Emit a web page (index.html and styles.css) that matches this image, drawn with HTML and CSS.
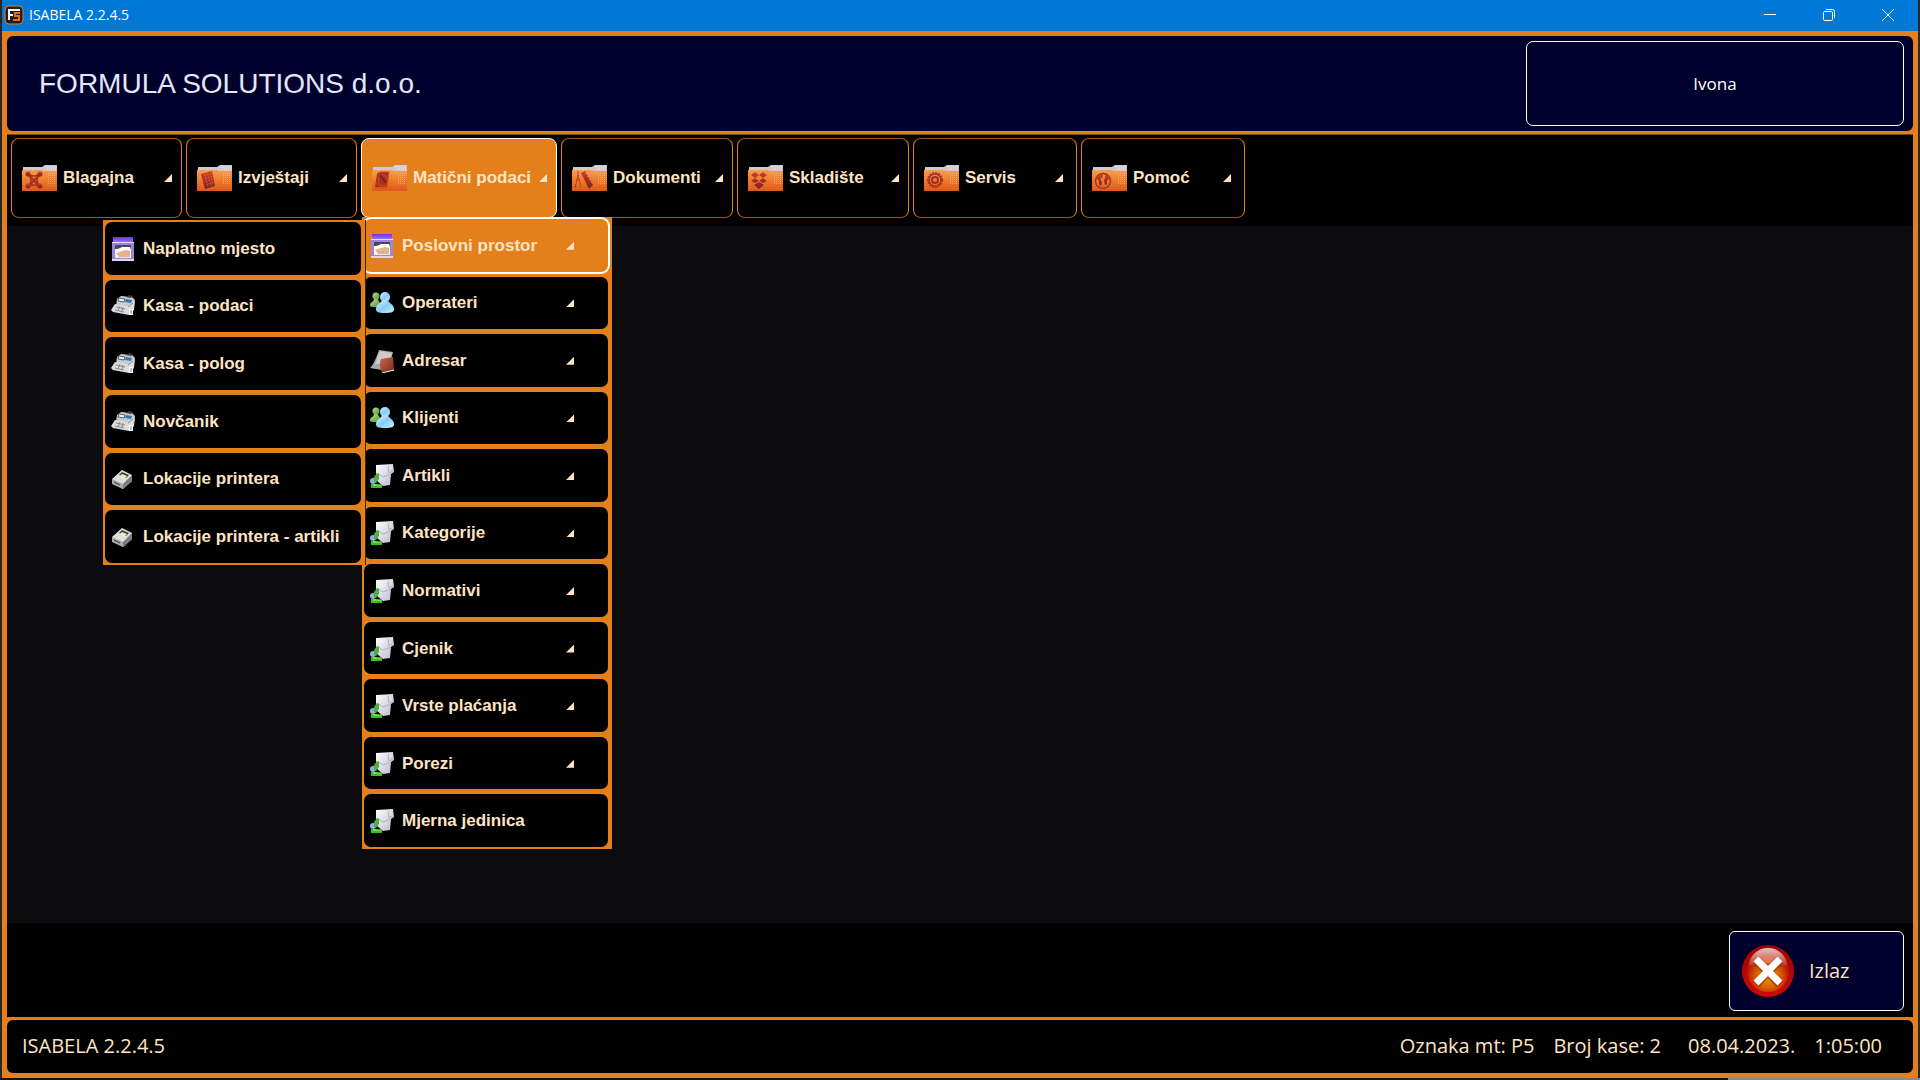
FILE: index.html
```html
<!DOCTYPE html>
<html lang="hr">
<head>
<meta charset="utf-8">
<title>ISABELA 2.2.4.5</title>
<link rel="stylesheet" href="styles.css">
</head>
<body>
<svg class="sprite" aria-hidden="true">
  <defs>
    <linearGradient id="g-folder" x1="0" y1="0" x2="0" y2="1"><stop offset="0" stop-color="#f5a050"/><stop offset=".5" stop-color="#ee7a2e"/><stop offset="1" stop-color="#e0581a"/></linearGradient>
    <linearGradient id="g-glyph" x1="0" y1="0" x2="0" y2="1"><stop offset="0" stop-color="#cf3f1d"/><stop offset="1" stop-color="#7c1d2c"/></linearGradient>
    <linearGradient id="g-blue" x1="0" y1="0" x2="1" y2="1"><stop offset="0" stop-color="#d8f4ff"/><stop offset=".5" stop-color="#86cdf4"/><stop offset="1" stop-color="#c8efff"/></linearGradient>
    <linearGradient id="g-green" x1="0" y1="0" x2="1" y2="1"><stop offset="0" stop-color="#b6e08e"/><stop offset="1" stop-color="#4c9430"/></linearGradient>
    <linearGradient id="g-paper" x1="0" y1="0" x2="1" y2="1"><stop offset="0" stop-color="#ffffff"/><stop offset="1" stop-color="#b8b8cc"/></linearGradient>
    <linearGradient id="g-violet" x1="0" y1="0" x2="0" y2="1"><stop offset="0" stop-color="#7030f0"/><stop offset="1" stop-color="#a07cf8"/></linearGradient>
    <linearGradient id="g-brick" x1="0" y1="0" x2="1" y2="1"><stop offset="0" stop-color="#c9694a"/><stop offset="1" stop-color="#7c2b18"/></linearGradient>
    <radialGradient id="g-exit" cx=".5" cy=".62" r=".5"><stop offset="0" stop-color="#f29a00"/><stop offset=".55" stop-color="#d96406"/><stop offset="1" stop-color="#b81806"/></radialGradient>
    <linearGradient id="g-rim" x1="0" y1="0" x2="0" y2="1"><stop offset="0" stop-color="#9a0404"/><stop offset="1" stop-color="#d00808"/></linearGradient>
    <linearGradient id="g-shine" x1="0" y1="0" x2="0" y2="1"><stop offset="0" stop-color="#fff" stop-opacity=".75"/><stop offset="1" stop-color="#fff" stop-opacity=".1"/></linearGradient>
    <pattern id="p-dots" width="2" height="2" patternUnits="userSpaceOnUse"><rect width="1" height="1" fill="#ffc080" fill-opacity=".55"/></pattern>
  </defs>
  <symbol id="folder" viewBox="0 0 35 26">
    <path d="M1 6V2h19l3-2h12v8H1z" fill="#d2c8d2"/>
    <path d="M23 2h11M25 4h9" stroke="#f0e8ee" stroke-width="1" stroke-dasharray="1 1"/>
    <path d="M0 5h20l2 1h13v20H0z" fill="url(#g-folder)"/>
    <path d="M25 7h9v13h-9z" fill="url(#p-dots)"/>
  </symbol>
  <symbol id="cash" viewBox="0 0 35 26">
    <use href="#folder"/>
    <g fill="none" stroke="#a8301f" stroke-width="2"><path d="M6 9l12 13M18 9L6 22"/><path d="M7 8c1 4 9 4 10 0M7 23c1-4 9-4 10 0M6 10c4 2 4 9 0 11M18 10c-4 2-4 9 0 11" stroke-width="1.500"/></g>
    <g fill="url(#g-glyph)"><circle cx="6" cy="9" r="2.500"/><circle cx="18" cy="9" r="2.500"/><circle cx="6" cy="21" r="2.500"/><circle cx="18" cy="21" r="2.500"/></g>
  </symbol>
  <symbol id="report" viewBox="0 0 35 26">
    <use href="#folder"/>
    <path d="M4 9l11-3 3 15-10 3z" fill="url(#g-glyph)"/>
    <path d="M6 11l10-3M6 14l11-3M7 17l10-3M8 20l10-3M7 8l4 14M10 7l4 14M13 7l3 14" stroke="#ec7a38" stroke-width="1" stroke-opacity=".35"/>
  </symbol>
  <symbol id="master" viewBox="0 0 35 26">
    <use href="#folder"/>
    <path d="M3 22L5 9l3-2h9l-2 15z" fill="#a8321f"/>
    <path d="M6 20L7 10h5l4 4-2 7zM3 23h12M5 9l3-2h9l-2 14" fill="none" stroke="#d0481e" stroke-width="1"/>
    <path d="M8 10l6 8" stroke="#7a2020" stroke-width="2"/>
  </symbol>
  <symbol id="docs" viewBox="0 0 35 26">
    <use href="#folder"/>
    <path d="M9 8l4-2 8 14-4 4z" fill="url(#g-glyph)"/>
    <path d="M13 9l2-1M15 12l2-1M17 15l2-1M19 18l1-1" stroke="#ec7a38" stroke-width="1"/>
    <path d="M6 6v5l-3 12M6 10l3 12M4 15h4" fill="none" stroke="#b5401f" stroke-width="1"/>
  </symbol>
  <symbol id="stock" viewBox="0 0 35 26">
    <use href="#folder"/>
    <path d="M7 7l4 3-4 3-4-3zM15 7l4 3-4 3-4-3zM7 13l4 3-4 2-4-2zM15 13l4 3-4 2-4-2zM11 17l5 3-5 4-5-4z" fill="url(#g-glyph)"/>
  </symbol>
  <symbol id="service" viewBox="0 0 35 26">
    <use href="#folder"/>
    <circle cx="11" cy="15" r="7" fill="none" stroke="#a83222" stroke-width="2" stroke-dasharray="2 1"/>
    <circle cx="11" cy="15" r="6" fill="none" stroke="#a83222" stroke-width="1.500"/>
    <circle cx="11" cy="15" r="3" fill="none" stroke="#a02c28" stroke-width="2"/>
  </symbol>
  <symbol id="help" viewBox="0 0 35 26">
    <use href="#folder"/>
    <circle cx="11" cy="16" r="7.500" fill="none" stroke="#a83222" stroke-width="1.500"/>
    <path d="M5 13l4-4 2 1-1 3-2 1 2 3-1 4-2-2v-3zM13 10l3 1 1 3-2 1v4l-2 1-1-5 1-2z" fill="url(#g-glyph)"/>
  </symbol>
  <symbol id="shop" viewBox="0 0 24 24">
    <path d="M2 0h20v6H2z" fill="url(#g-violet)"/>
    <path d="M1 6h22v18H1z" fill="#9c86d8"/>
    <path d="M1 5h22v1H1z" fill="#e6defc"/>
    <path d="M4 8h16v13H4z" fill="#e9e6ee"/>
    <path d="M4 8h16v4H4z" fill="#4a4a52"/>
    <path d="M4 13l5-2 2-1h8l1 3v7H5z" fill="#fff"/>
    <path d="M5 16l6-2 4-1 4 1v6H8z" fill="#e3b48c"/>
    <path d="M1 22h22v2H1z" fill="#ded6ee"/>
  </symbol>
  <symbol id="register" viewBox="0 0 24 24">
    <path d="M6 5l4-3 11 1 3 3-2 8-17-2z" fill="#c4ccd4"/>
    <path d="M14 3l4-2 4 1-2 2z" fill="#3c3c3c"/>
    <path d="M8 4l6 1-1 3-6-1z" fill="#eef2f4" stroke="#55595d" stroke-width="1"/>
    <path d="M15 5l6 1-1 3-6-1z" fill="#2f78b4"/>
    <path d="M4 10l13 2 7-5-1 9-5 5-16-3-2-2z" fill="#dcdcdc"/>
    <path d="M5 13l9 2M4 16l9 2M9 12l-2 5M12 13l-1 4M17 13l5-4" fill="none" stroke="#85898f"/>
    <path d="M18 15h4v6h-4z" fill="#fff"/><path d="M20 16v4" stroke="#5a8ab4"/>
  </symbol>
  <symbol id="printer" viewBox="0 0 24 24">
    <path d="M1 12L11 3l10 5v6l-9 8-11-6z" fill="#dedede"/>
    <path d="M1 12l11 5v5L1 17z" fill="#a8a8a8"/>
    <path d="M12 17l9-9v6l-9 8z" fill="#7c7c7c"/>
    <path d="M8 8l3-3 7 3-3 3z" fill="#3d3d3d"/><path d="M9 9l2-2 5 2-3 3z" fill="#f2eebc"/>
    <path d="M3 15l6 3" stroke="#333" stroke-width="1"/>
  </symbol>
  <symbol id="people" viewBox="0 0 24 24">
    <circle cx="6" cy="5" r="3.500" fill="url(#g-green)"/>
    <path d="M4 8h4c0 2 3 3 3 8H3c-2 0-3-1-3-2 0-3 4-3 4-6z" fill="url(#g-green)"/>
    <circle cx="15" cy="6" r="5" fill="url(#g-blue)"/>
    <path d="M12 9h6c0 3 6 4 6 9 0 3-2 4-9 4s-9-1-9-4c0-5 6-6 6-9z" fill="url(#g-blue)"/>
  </symbol>
  <symbol id="address" viewBox="0 0 24 24">
    <path d="M9 1l14 2-5 19-18-3c4-4 6-10 9-18z" fill="#a9a9a9"/>
    <path d="M10 2l12 2-3 10-14 1z" fill="#cccccc"/>
    <path d="M11 10l12-2 1 13-12 2c-2-3-3-8-1-13z" fill="url(#g-brick)"/>
    <path d="M12 24l12-3" stroke="#fff" stroke-width="1"/>
  </symbol>
  <symbol id="item" viewBox="0 0 24 24">
    <path d="M6 1l17-1 1 8-3 2-1 11-7 1-7-6z" fill="url(#g-paper)"/>
    <path d="M7 9l6 4 8-3M18 2l1 7 4-2" fill="none" stroke="#b0b0c6"/>
    <circle cx="3" cy="17" r="3" fill="#88b4e4"/>
    <path d="M4 13l3-4 2 1v5l-3 4-2-1z" fill="#4fae3c"/>
    <path d="M1 20h5l2 1h4v3H1z" fill="#35c414"/><path d="M3 21h8" stroke="#b6f48a"/>
  </symbol>
</svg>

<header class="titlebar">
  <svg class="app-logo" viewBox="0 0 20 20" aria-hidden="true">
    <rect x="1" y="1" width="18" height="18" rx="4" fill="#22201f" stroke="#e4801c" stroke-width="1"/>
    <path d="M5 15V5h11M5 10h4" fill="none" stroke="#fff" stroke-width="2"/>
    <path d="M16 8h-5v3h4v4H9" fill="none" stroke="#e4701c" stroke-width="2"/>
  </svg>
  <h1 class="titlebar-text">ISABELA 2.2.4.5</h1>
  <div class="window-controls">
    <button type="button" aria-label="Minimize"><svg viewBox="0 0 12 12"><path d="M0 5.500h12"/></svg></button>
    <button type="button" aria-label="Restore"><svg viewBox="0 0 12 12"><rect x=".5" y="2.500" width="9" height="9" rx="1"/><path d="M3 .5h6.500a2 2 0 0 1 2 2V9"/></svg></button>
    <button type="button" aria-label="Close"><svg viewBox="0 0 12 12"><path d="M0 0l12 12M12 0L0 12"/></svg></button>
  </div>
</header>

<div class="frame">
  <section class="company">
    <h2 class="company-name">FORMULA SOLUTIONS d.o.o.</h2>
    <button type="button" class="user">Ivona</button>
  </section>

  <main class="workspace">
    <nav class="menubar" aria-label="Glavni izbornik">
      <ul class="menu">
        <li><button type="button" class="menu-button"><svg class="folder"><use href="#cash"/></svg>Blagajna<span class="arrow"></span></button></li>
        <li><button type="button" class="menu-button"><svg class="folder"><use href="#report"/></svg>Izvještaji<span class="arrow"></span></button></li>
        <li>
          <button type="button" class="menu-button active" aria-expanded="true"><svg class="folder"><use href="#master"/></svg>Matični podaci<span class="arrow"></span></button>
          <ul class="submenu main-submenu">
            <li>
              <button type="button" class="sub-button active" aria-expanded="true"><svg class="icon"><use href="#shop"/></svg>Poslovni prostor<span class="arrow"></span></button>
              <ul class="submenu side-submenu">
                <li><button type="button" class="sub-button"><svg class="icon"><use href="#shop"/></svg>Naplatno mjesto</button></li>
                <li><button type="button" class="sub-button"><svg class="icon"><use href="#register"/></svg>Kasa - podaci</button></li>
                <li><button type="button" class="sub-button"><svg class="icon"><use href="#register"/></svg>Kasa - polog</button></li>
                <li><button type="button" class="sub-button"><svg class="icon"><use href="#register"/></svg>Novčanik</button></li>
                <li><button type="button" class="sub-button"><svg class="icon"><use href="#printer"/></svg>Lokacije printera</button></li>
                <li><button type="button" class="sub-button"><svg class="icon"><use href="#printer"/></svg>Lokacije printera - artikli</button></li>
              </ul>
            </li>
            <li><button type="button" class="sub-button"><svg class="icon"><use href="#people"/></svg>Operateri<span class="arrow"></span></button></li>
            <li><button type="button" class="sub-button"><svg class="icon"><use href="#address"/></svg>Adresar<span class="arrow"></span></button></li>
            <li><button type="button" class="sub-button"><svg class="icon"><use href="#people"/></svg>Klijenti<span class="arrow"></span></button></li>
            <li><button type="button" class="sub-button"><svg class="icon"><use href="#item"/></svg>Artikli<span class="arrow"></span></button></li>
            <li><button type="button" class="sub-button"><svg class="icon"><use href="#item"/></svg>Kategorije<span class="arrow"></span></button></li>
            <li><button type="button" class="sub-button"><svg class="icon"><use href="#item"/></svg>Normativi<span class="arrow"></span></button></li>
            <li><button type="button" class="sub-button"><svg class="icon"><use href="#item"/></svg>Cjenik<span class="arrow"></span></button></li>
            <li><button type="button" class="sub-button"><svg class="icon"><use href="#item"/></svg>Vrste plaćanja<span class="arrow"></span></button></li>
            <li><button type="button" class="sub-button"><svg class="icon"><use href="#item"/></svg>Porezi<span class="arrow"></span></button></li>
            <li><button type="button" class="sub-button"><svg class="icon"><use href="#item"/></svg>Mjerna jedinica</button></li>
          </ul>
        </li>
        <li><button type="button" class="menu-button"><svg class="folder"><use href="#docs"/></svg>Dokumenti<span class="arrow"></span></button></li>
        <li><button type="button" class="menu-button"><svg class="folder"><use href="#stock"/></svg>Skladište<span class="arrow"></span></button></li>
        <li><button type="button" class="menu-button narrow"><svg class="folder"><use href="#service"/></svg>Servis<span class="arrow"></span></button></li>
        <li><button type="button" class="menu-button narrow"><svg class="folder"><use href="#help"/></svg>Pomoć<span class="arrow"></span></button></li>
      </ul>
    </nav>
    <div class="content"></div>
    <div class="actions">
      <button type="button" class="exit">
        <svg class="exit-icon" viewBox="0 0 54 54" aria-hidden="true">
          <circle cx="27" cy="27" r="26" fill="url(#g-rim)"/>
          <circle cx="27" cy="27" r="21" fill="url(#g-exit)"/>
          <path d="M8 22a19 18 0 0 1 38 0c-9-4-29-4-38 0z" fill="url(#g-shine)"/>
          <path d="M15 16l24 24M39 16L15 40" stroke="#7a1a00" stroke-opacity=".5" stroke-width="9"/>
          <path d="M15 15l24 24M39 15L15 39" stroke="#fff" stroke-width="7"/>
        </svg>
        Izlaz
      </button>
    </div>
  </main>

  <footer class="status">
    <span class="version">ISABELA 2.2.4.5</span>
    <span>Oznaka mt: P5</span>
    <span>Broj kase: 2</span>
    <span class="date">08.04.2023.</span>
    <span>1:05:00</span>
  </footer>
</div>
</body>
</html>
```
FILE: styles.css
```css
:root {
  --orange: #e4801c;
  --orange-dark: #7c450f;
  --navy: #00002c;
  --cream: #ffe4c4;
  --ui: "Open Sans", "Noto Sans", sans-serif;
}

* {
  box-sizing: border-box;
}

body {
  margin: 0;
  min-height: 100vh;
  padding: 0 2px 2px;
  display: flex;
  flex-direction: column;
  background: linear-gradient(to right, #14110e 90%, #8a8a8a 90%) bottom / 100% 2px no-repeat #26282c;
  color: var(--cream);
  font-family: "Liberation Sans", Arial, sans-serif;
}

button {
  margin: 0;
  padding: 0;
  border: 0;
  background: none;
  color: inherit;
  font: inherit;
}

h1, h2, ul {
  margin: 0;
  padding: 0;
  font-weight: normal;
  list-style: none;
}

.sprite {
  position: absolute;
  width: 0;
  height: 0;
}

.titlebar {
  display: flex;
  align-items: center;
  gap: 5px;
  height: 31px;
  padding: 0 1px 1px 2px;
  background: #0078d7;
  color: #fff;
}

.app-logo {
  width: 20px;
  height: 20px;
}

.titlebar-text {
  font: 14px/20px var(--ui);
}

.window-controls {
  display: flex;
  margin-left: auto;
}

.window-controls button {
  display: grid;
  place-items: center;
  width: 59px;
  height: 30px;
}

.window-controls svg {
  width: 12px;
  height: 12px;
  fill: none;
  stroke: #fff;
}

.frame {
  flex: 1;
  display: flex;
  flex-direction: column;
  padding: 5px;
  gap: 3px;
  background: var(--orange);
}

.company {
  display: flex;
  align-items: center;
  justify-content: space-between;
  height: 95px;
  padding: 0 9px 0 32px;
  border-radius: 6px;
  background: var(--navy);
}

.company-name {
  color: #e6e6fa;
  font-size: 28px;
  line-height: 32px;
}

.user {
  width: 378px;
  height: 85px;
  border: 1px solid #fff;
  border-radius: 7px;
  color: #fff;
  font: 17px/24px var(--ui);
}

.workspace {
  flex: 1;
  display: flex;
  flex-direction: column;
  border-top: 1px solid var(--orange-dark);
  background: #000;
}

.menubar {
  padding: 3px 4px 8px;
}

.menu {
  display: grid;
  grid-template-columns: 171px 171px 196px 172px 172px 164px 164px;
  gap: 4px;
}

.menu > li {
  position: relative;
}

.menu-button {
  display: flex;
  align-items: center;
  gap: 6px;
  width: 100%;
  height: 80px;
  padding: 0 9px 0 10px;
  border: 1px solid var(--orange);
  border-block-color: #a05a14;
  border-radius: 8px;
  font-size: 17px;
  font-weight: bold;
  line-height: 20px;
  white-space: nowrap;
}

.menu-button.narrow {
  padding-right: 13px;
}

.menu-button.active {
  border-color: #fff;
  background: var(--orange);
}

.folder {
  flex: none;
  width: 35px;
  height: 26px;
}

.arrow {
  flex: none;
  width: 8px;
  height: 8px;
  margin-left: auto;
  background: var(--cream);
  clip-path: polygon(100% 0, 100% 100%, 0 100%);
}

.submenu {
  position: absolute;
  display: grid;
  grid-auto-rows: 1fr;
  gap: 5px;
  padding: 2px 4px 2px 2px;
  background: var(--orange);
}

.main-submenu {
  top: 79px;
  left: 1px;
  z-index: 1;
  width: 250px;
  height: 632px;
}

.side-submenu {
  top: 3px;
  right: calc(100% - 4px);
  z-index: 2;
  width: 263px;
  height: 345px;
  border-right: 1px solid #3c220a;
}

.sub-button {
  display: flex;
  align-items: center;
  gap: 8px;
  width: 100%;
  height: 100%;
  padding: 1px 34px 0 6px;
  border-radius: 7px;
  background: #000;
  font-size: 17px;
  font-weight: bold;
  line-height: 20px;
  white-space: nowrap;
}

.sub-button.active {
  background: var(--orange);
  box-shadow: 0 0 0 2px #fff;
}

.side-submenu .sub-button {
  padding-right: 6px;
}

.icon {
  flex: none;
  width: 24px;
  height: 24px;
}

.content {
  flex: 1;
  background: #0c0c0e;
}

.actions {
  display: flex;
  justify-content: flex-end;
  padding: 8px 9px 6px;
}

.exit {
  display: flex;
  align-items: center;
  gap: 14px;
  width: 175px;
  height: 80px;
  padding-left: 11px;
  border: 1px solid #fff;
  border-radius: 6px;
  background: var(--navy);
  font: 20px/28px var(--ui);
}

.exit-icon {
  width: 54px;
  height: 54px;
}

.status {
  display: flex;
  align-items: center;
  gap: 19px;
  height: 53px;
  padding: 0 31px 2px 15px;
  border-radius: 6px;
  background: #000;
  font: 20px/28px var(--ui);
}

.version {
  margin-right: auto;
}

.date {
  margin-left: 8px;
}
```
